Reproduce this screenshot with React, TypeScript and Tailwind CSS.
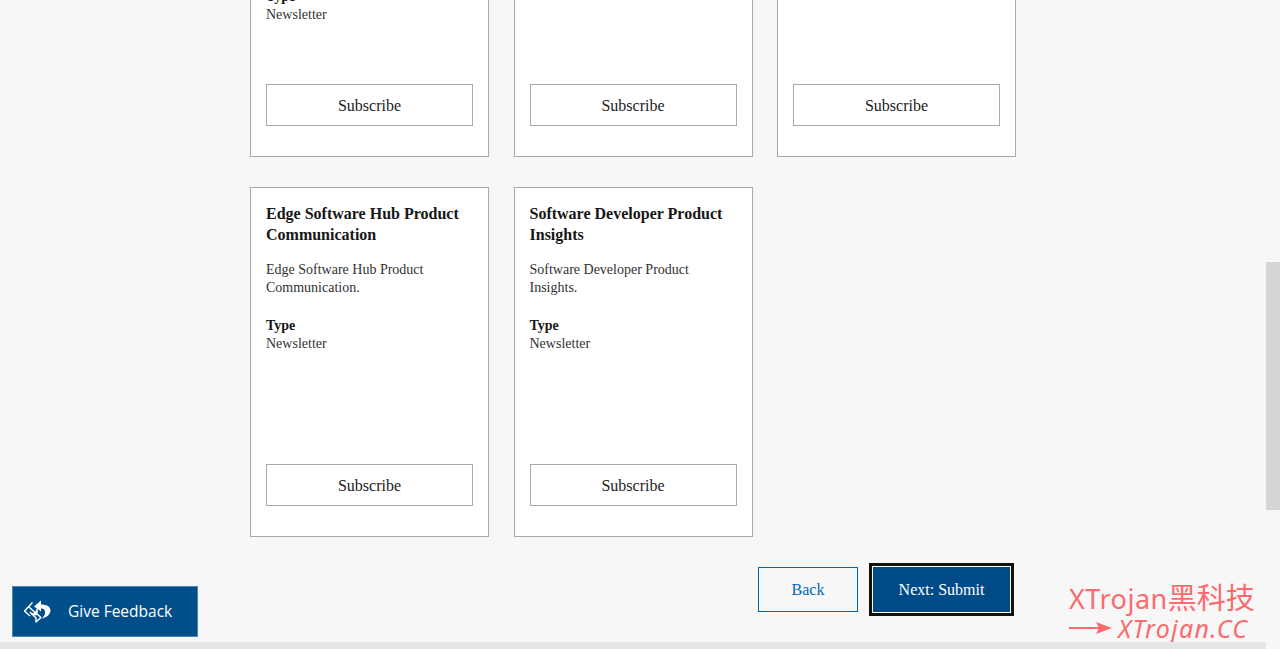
const serif = "font-['Liberation_Serif','Times_New_Roman',serif]";

const cards = [
  {
    title: "Azure Stack and Hybrid Cloud Product Communication",
    description:
      "Azure Stack and Hybrid Cloud Product Communication. Get the latest news, updates and product insights for your organization.",
  },
  {
    title: "Visual Studio Product Updates",
    description: "Visual Studio Product Updates.",
  },
  {
    title: "Windows Server Product Updates",
    description: "Windows Server Product Updates.",
  },
  {
    title: "Edge Software Hub Product Communication",
    description: "Edge Software Hub Product Communication.",
  },
  {
    title: "Software Developer Product Insights",
    description: "Software Developer Product Insights.",
  },
];

const FeedbackIcon = () => (
  <svg width="28" height="24" viewBox="0 0 28 24" fill="none">
    <path
      d="M9.5 2.5 L1.5 11 L7 16 M6 7 L12.5 13 L9 14.5 H14 V9.5 L12.5 13 M7 12 L13 18 V22 L18 17.5 L14 14"
      stroke="white"
      strokeWidth="1.5"
      strokeLinejoin="round"
    />
    <path
      d="M18 0.5 L11 6.5 L18 11.5 V8.5 C21 8.5 22.5 10.5 22 13.5 C21.5 15.5 20.5 17 19 18.5 C24 17.5 27.5 14 27.5 10.5 C27.5 6.5 23.5 4.5 18 4.5 Z"
      fill="white"
    />
  </svg>
);

const App = () => {
  return (
    <div className={`relative h-[649px] overflow-hidden bg-[#f7f7f7] ${serif}`}>
      <div className="-mt-[199px] ml-[250px] w-[766px]">
        <div className="grid grid-cols-[239px_239px_239px] grid-rows-[356px_350px] gap-x-[24.5px] gap-y-[30px]">
          {cards.map((card) => (
            <div
              key={card.title}
              className="flex flex-col border border-[#a9a9a9] bg-white px-[15px] pt-[15px] pb-[30px]"
            >
              <h3 className="text-[16px] leading-[21px] font-bold text-[#161616]">{card.title}</h3>
              <p className="mt-[16px] text-[14px] leading-[18px] text-[#323232]">{card.description}</p>
              <div className="mt-[20px] text-[14px] leading-[18px] font-bold text-[#161616]">Type</div>
              <div className="text-[14px] leading-[18px] text-[#323232]">Newsletter</div>
              <button className="mt-auto h-[42px] w-[207px] border border-[#a9a9a9] bg-white pt-[1px] text-[16px] text-[#212121]">
                Subscribe
              </button>
            </div>
          ))}
        </div>
        <div className="mt-[26px] flex items-center justify-end gap-[11px] pr-[2px]">
          <button className="h-[45px] w-[100px] border border-[#0067b8] text-[16px] text-[#0067b8]">
            Back
          </button>
          <button className="h-[53px] w-[145px] border-[3px] border-[#111111] bg-[#004b87] text-[16px] text-white outline outline-1 -outline-offset-4 outline-white">
            Next: Submit
          </button>
        </div>
      </div>

      {/* Feedback button */}
      <button className="absolute top-[586px] left-3 flex h-[51px] w-[186px] items-center gap-[17px] border border-[#4d88b5] bg-[#004e8a] pl-[10px] font-['Open_Sans',sans-serif] text-[15.5px] text-white">
        <FeedbackIcon />
        Give Feedback
      </button>

      {/* Watermark */}
      <div className="absolute top-[582px] left-[1069px] font-['Noto_Sans','Noto_Sans_CJK_SC',sans-serif] whitespace-nowrap text-[#fb6b6e]">
        <div className="flex h-[32px] items-baseline text-[27px] leading-[32px] tracking-[0.5px]">
          XTrojan
          <span className="text-[29px] leading-[32px] tracking-normal">黑科技</span>
        </div>
        <div className="flex items-center gap-[6px]">
          <svg width="43" height="14" viewBox="0 0 43 14">
            <path d="M0 6 H30 V8 H0 Z M27 1 L43 7 L27 13 L30 7 Z" fill="#fb6b6e" />
          </svg>
          <span className="text-[25px] leading-[28px] tracking-[1.3px] italic">XTrojan.CC</span>
        </div>
      </div>

      {/* Scrollbars */}
      <div className="absolute top-[262px] right-0 h-[248px] w-[14px] bg-[#d5d5d5]" />
      <div className="absolute bottom-0 left-0 h-[7px] w-[1266px] bg-[#e6e6e6]" />
    </div>
  );
};

export default App;
